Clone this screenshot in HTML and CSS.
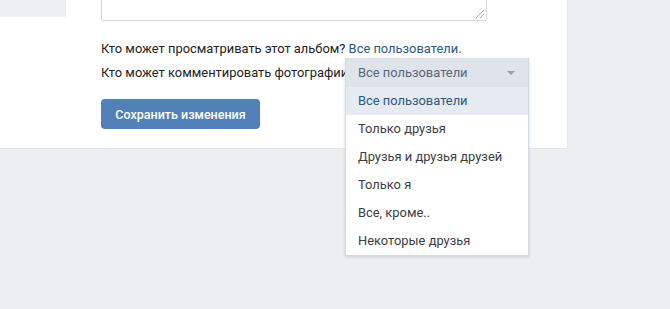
FILE: index.html
```html
<!DOCTYPE html>
<html lang="ru">
<head>
  <meta charset="UTF-8">
  <title>Редактирование альбома</title>
  <link rel="stylesheet" href="styles.css">
</head>
<body>
  <div class="page">
    <div class="card">
      <div class="side-stub"></div>
      <div class="form">
        <div class="textarea"><span class="grip"></span></div>

        <p class="privacy-row">
          Кто может просматривать этот альбом? <a href="#" class="link">Все пользователи.</a>
        </p>
        <p class="privacy-row">
          Кто может комментировать фотографии?
        </p>

        <button class="save-button">Сохранить изменения</button>
      </div>
    </div>

    <div class="dropdown">
      <div class="dropdown-head">
        <span>Все пользователи</span>
        <span class="arrow"></span>
      </div>
      <ul class="dropdown-list">
        <li class="selected">Все пользователи</li>
        <li>Только друзья</li>
        <li>Друзья и друзья друзей</li>
        <li>Только я</li>
        <li>Все, кроме..</li>
        <li>Некоторые друзья</li>
      </ul>
    </div>
  </div>
</body>
</html>
```

FILE: styles.css
```css
/* Album privacy settings */
html, body {
  margin: 0;
  height: 100%;
  background-color: #edeef0;
}
body {
  font-family: Roboto, "Open Sans", Arial, sans-serif;
  font-size: 12.9px;
  color: #000;
}
.page {
  position: relative;
  height: 100%;
}
.card {
  width: 568px;
  height: 149px;
  background-color: #fff;
  border-bottom: 1px solid #e3e4e8;
  border-right: 1px solid #e7e8ec;
  box-sizing: border-box;
  display: flex;
}
.side-stub {
  width: 66px;
  height: 17px;
  background-color: #eef1f4;
}
.form {
  margin-left: 35px;
  width: 386px;
}
.textarea {
  height: 21px;
  border: 1px solid #d3d9de;
  border-top: none;
  border-radius: 0 0 2px 2px;
  box-sizing: border-box;
  position: relative;
}
.grip {
  position: absolute;
  right: 2px;
  bottom: 2px;
  width: 8px;
  height: 8px;
  background: linear-gradient(135deg, transparent 45%, #9aa 45%, #9aa 55%, transparent 55%, transparent 70%, #9aa 70%, #9aa 80%, transparent 80%);
}
.privacy-row {
  white-space: nowrap;
  line-height: 16px;
  margin: 8px 0 0;
  color: #222;
}
.textarea + .privacy-row {
  margin-top: 20px;
}
.link {
  color: #2a5885;
  text-decoration: none;
}
/* open privacy menu, laid over the form */
.dropdown {
  position: absolute;
  left: 345px;
  top: 58px;
  width: 182px;
  background-color: #fff;
  border: 1px solid #d3dae2;
  border-top: none;
  box-shadow: 0 1px 3px rgba(0, 0, 0, 0.14);
  font-size: 12.9px;
}
.dropdown-head {
  height: 29px;
  padding: 0 12px;
  background-color: #dfe4ea;
  color: #55677d;
  display: flex;
  align-items: center;
  justify-content: space-between;
}
.arrow {
  width: 0;
  height: 0;
  border-left: 4px solid transparent;
  border-right: 4px solid transparent;
  border-top: 4px solid #92a0b1;
  margin-right: 1px;
}
.dropdown-list {
  list-style: none;
  margin: 0;
  padding: 0;
}
.dropdown-list li {
  height: 28px;
  line-height: 28px;
  padding: 0 12px;
  color: #3d3d3d;
}
.dropdown-list li.selected {
  background-color: #e5ebf1;
  color: #2a5885;
}
.save-button {
  margin-top: 18px;
  width: 159px;
  height: 30px;
  border: none;
  border-radius: 4px;
  background-color: #5181b8;
  color: #fff;
  font-family: inherit;
  font-size: 12.5px;
  font-weight: 500;
  cursor: pointer;
}
```
